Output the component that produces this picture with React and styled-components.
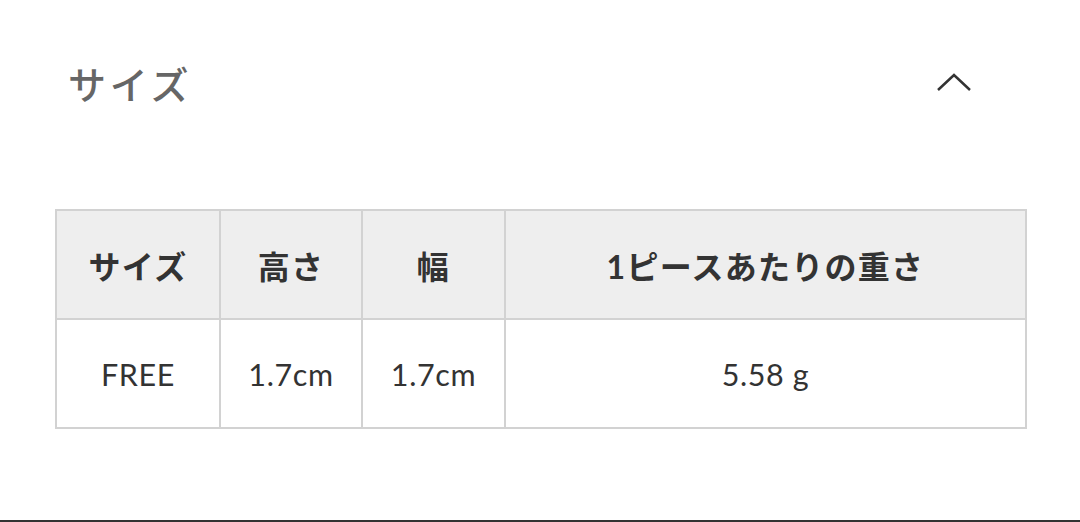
import React from 'react'
import styled, { createGlobalStyle } from 'styled-components'

const GlobalStyle = createGlobalStyle`
  html, body {
    margin: 0;
    padding: 0;
    background: #ffffff;
  }
  body {
    font-family: Lato, "Noto Sans CJK JP", sans-serif;
    color: #333333;
  }
`

const Page = styled.div`
  width: 1080px;
  height: 522px;
  box-sizing: border-box;
  border-bottom: 2px solid #333333;
  display: flex;
  flex-direction: column;
`

const Section = styled.section`
  padding: 50px 55px 0 55px;
  display: flex;
  flex-direction: column;
`

const Head = styled.div`
  height: 64px;
  display: flex;
  align-items: center;
  justify-content: space-between;
`

const Title = styled.h2`
  margin: 0 0 0 13px;
  font-family: "Noto Sans CJK JP", sans-serif;
  font-size: 38px;
  font-weight: 500;
  letter-spacing: 0.1em;
  color: #666666;
`

const Toggle = styled.button`
  border: 0;
  background: none;
  padding: 0;
  margin-right: 52px;
  width: 38px;
  height: 24px;
  display: flex;
  align-items: center;
  justify-content: center;
  cursor: pointer;
`

const Table = styled.table`
  margin-top: 95px;
  width: 970px;
  border-collapse: collapse;
  table-layout: fixed;
  border: 2px solid #d2d2d2;
`

const Cell = styled.td`
  height: 107px;
  border: 2px solid #d2d2d2;
  text-align: center;
  vertical-align: middle;
  padding: 0;
  font-family: Lato, "Noto Sans CJK JP", sans-serif;
  font-size: ${p => (p.$head ? '32px' : '30.5px')};
  font-weight: ${p => (p.$head ? 700 : 400)};
  letter-spacing: ${p => (p.$head ? '0.04em' : '0.02em')};
  background: ${p => (p.$head ? '#eeeeee' : '#ffffff')};
  color: #333333;
`

const columns = [164, 142, 143, 521]
const heads = ['サイズ', '高さ', '幅', '1ピースあたりの重さ']
const values = ['FREE', '1.7cm', '1.7cm', '5.58 g']

const Chevron = () => (
  <svg width="36" height="20" viewBox="0 0 36 20" fill="none">
    <path d="M2 18 L18 3 L34 18" stroke="#333333" strokeWidth="2.5" />
  </svg>
)

export default function App() {
  return (
    <Page>
      <GlobalStyle />
      <Section>
        <Head>
          <Title>サイズ</Title>
          <Toggle aria-label="閉じる">
            <Chevron />
          </Toggle>
        </Head>
        <Table>
          <colgroup>
            {columns.map((w, i) => (
              <col key={i} style={{ width: w }} />
            ))}
          </colgroup>
          <tbody>
            <tr>
              {heads.map(h => (
                <Cell as="th" $head key={h}>{h}</Cell>
              ))}
            </tr>
            <tr>
              {values.map((v, i) => (
                <Cell key={i}>{v}</Cell>
              ))}
            </tr>
          </tbody>
        </Table>
      </Section>
    </Page>
  )
}
